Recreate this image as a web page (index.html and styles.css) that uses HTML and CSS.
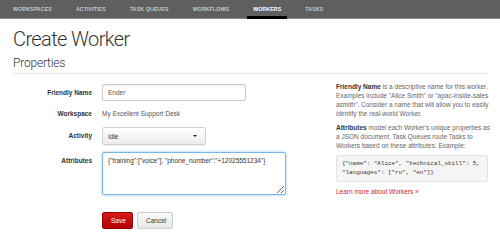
FILE: index.html
```html
<!DOCTYPE html>
<html lang="en">
<head>
    <meta charset="UTF-8">
    <meta name="viewport" content="width=device-width, initial-scale=1.0">
    <title>Create Worker</title>
    <link rel="stylesheet" href="styles.css">
</head>
<body>
    <nav class="topnav">
        <a href="#">Workspaces</a>
        <a href="#">Activities</a>
        <a href="#">Task Queues</a>
        <a href="#">Workflows</a>
        <a href="#" class="active">Workers</a>
        <a href="#">Tasks</a>
    </nav>

    <div class="container">
        <h1>Create Worker</h1>
        <h2>Properties</h2>

        <div class="content">
            <form class="worker-form">
                <div class="field">
                    <label for="friendly_name">Friendly Name</label>
                    <input type="text" id="friendly_name" class="input" value="Ender">
                </div>

                <div class="field field-static">
                    <label>Workspace</label>
                    <span class="static">My Excellent Support Desk</span>
                </div>

                <div class="field">
                    <label class="label-tall">Activity</label>
                    <div class="select">
                        <span>Idle</span>
                        <span class="caret"></span>
                    </div>
                </div>

                <div class="field field-area">
                    <label for="attributes">Attributes</label>
                    <textarea id="attributes" class="textarea">{"training":["voice"], "phone_number":"+12025551234"}</textarea>
                </div>

                <div class="actions">
                    <button type="submit" class="btn btn-save">Save</button>
                    <button type="button" class="btn btn-cancel">Cancel</button>
                </div>
            </form>

            <aside class="help">
                <p><strong>Friendly Name</strong> is a descriptive name for this worker. Examples include "Alice Smith" or "apac-inside-sales asmith". Consider a name that will allow you to easily identify the real-world Worker.</p>
                <p><strong>Attributes</strong> model each Worker's unique properties as a JSON document. Task Queues route Tasks to Workers based on these attributes. Example:</p>
                <pre>{"name": "Alice", "technical_skill": 5,
"languages": ["ru", "en"]}</pre>
                <a href="#" class="more">Learn more about Workers &raquo;</a>
            </aside>
        </div>
    </div>
</body>
</html>
```

FILE: styles.css
```css
body {
    font-family: "Liberation Sans", Arial, sans-serif;
    color: #333;
    background: #fff;
    margin: 0;
    padding: 0;
}

/* top navigation */
.topnav {
    display: flex;
    gap: 12px;
    height: 18px;
    padding: 0 7px;
    background: #5f5f5f;
    border-bottom: 1px solid #8c8c8c;
}

.topnav a {
    display: block;
    padding: 0 6px;
    line-height: 18px;
    font-size: 5.2px;
    font-weight: bold;
    letter-spacing: 0.15px;
    text-transform: uppercase;
    text-decoration: none;
    color: #c8c8c8;
    border-bottom: 3px solid transparent;
    height: 16px;
}

.topnav a.active {
    color: #fff;
    border-bottom-color: #000;
}

.container {
    padding: 0 13px;
}

h1 {
    font-family: Roboto, "Liberation Sans", sans-serif;
    font-size: 20px;
    font-weight: 300;
    letter-spacing: -0.6px;
    line-height: 20px;
    margin: 10px 0 0;
    color: #333;
}

h2 {
    font-family: Roboto, "Liberation Sans", sans-serif;
    font-size: 12px;
    font-weight: 300;
    letter-spacing: -0.2px;
    line-height: 12px;
    margin: 8px 0 0;
    padding-bottom: 4px;
    border-bottom: 1px solid #e6e6e6;
    color: #333;
}

.content {
    display: grid;
    grid-template-columns: 310px 156px;
    gap: 13px;
}

/* form */
.worker-form {
    padding-top: 10px;
    font-size: 6.5px;
}

.field {
    display: flex;
    align-items: flex-start;
    margin-bottom: 7px;
}

.field label {
    width: 79px;
    margin-right: 10px;
    text-align: right;
    font-weight: bold;
    line-height: 17px;
    color: #333;
}

.field-static label,
.static {
    line-height: 12px;
}

.field .label-tall {
    line-height: 18px;
}

.static {
    color: #555;
}

.input {
    box-sizing: border-box;
    width: 144px;
    height: 17px;
    padding: 0 5px;
    font: 6.5px "Liberation Sans", Arial, sans-serif;
    color: #555;
    border: 1px solid #ccc;
    border-radius: 2px;
    box-shadow: inset 0 1px 1px rgba(0, 0, 0, 0.07);
}

.select {
    box-sizing: border-box;
    width: 104px;
    height: 18px;
    padding: 0 8px 0 5px;
    display: flex;
    align-items: center;
    justify-content: space-between;
    color: #333;
    background: linear-gradient(#ffffff, #ececec);
    border: 1px solid #cfcfcf;
    border-radius: 2px;
    box-shadow: 0 1px 1px rgba(0, 0, 0, 0.06);
}

.caret {
    width: 0;
    height: 0;
    border-left: 2px solid transparent;
    border-right: 2px solid transparent;
    border-top: 2px solid #222;
}

.textarea {
    box-sizing: border-box;
    width: 184px;
    height: 43px;
    padding: 4px 5px;
    font: 6.5px "Liberation Sans", Arial, sans-serif;
    color: #333;
    border: 1px solid #79b5e8;
    border-radius: 2px;
    box-shadow: 0 0 3px rgba(82, 168, 236, 0.6);
    outline: none;
}

.actions {
    display: flex;
    gap: 4px;
    margin: 17px 0 0 89px;
}

.btn {
    box-sizing: border-box;
    height: 17px;
    padding: 0 8px;
    font: 6.5px "Liberation Sans", Arial, sans-serif;
    border-radius: 2px;
    cursor: pointer;
}

.btn-save {
    width: 31px;
    color: #fff;
    background: linear-gradient(#d41c1c, #b30000);
    border: 1px solid #9e0000;
}

.btn-cancel {
    width: 36px;
    color: #333;
    background: linear-gradient(#fbfbfb, #e6e6e6);
    border: 1px solid #cdcdcd;
}

/* help column */
.help {
    padding-top: 8px;
    font-size: 6.5px;
    line-height: 9px;
    color: #666;
}

.help p {
    margin: 0 0 5px;
}

.help strong {
    color: #333;
}

.help pre {
    margin: 0 0 5px;
    padding: 4px 5px;
    width: 140px;
    font: 5.9px/8.5px "Liberation Mono", "Courier New", monospace;
    color: #333;
    background: #f5f5f5;
    border: 1px solid #e3e3e3;
    border-radius: 3px;
}

.more {
    color: #d0202a;
    text-decoration: none;
}
```
